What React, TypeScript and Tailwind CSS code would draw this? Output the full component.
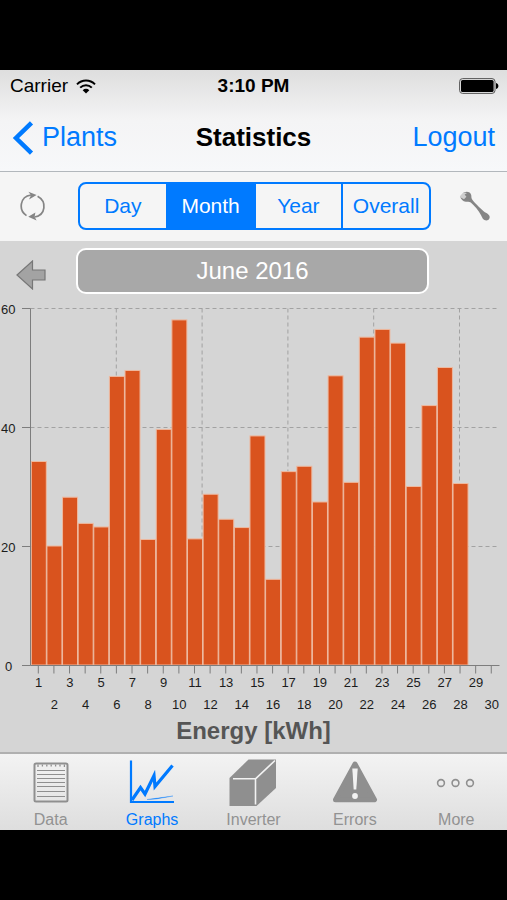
import React from 'react';

const energy = [
  34.2, 20.0, 28.2, 23.8, 23.2, 48.5, 49.5, 21.1, 39.6, 58.0,
  21.2, 28.7, 24.5, 23.1, 38.5, 14.4, 32.5, 33.4, 27.4, 48.6,
  30.7, 55.1, 56.4, 54.1, 30.0, 43.6, 50.0, 30.5,
];

const ranges = ['Day', 'Month', 'Year', 'Overall'];

// Plot area inside the chart's own coordinate system
const LEFT = 30.5;
const RIGHT = 499.5;
const TOP = 8.5;
const BOTTOM = 365.5;
const STEP = 15.62;
const DAYS = 30;

const toY = (value: number) => BOTTOM - (value / 60) * (BOTTOM - TOP);

const EnergyChart: React.FC = () => (
  <svg
    viewBox="0 0 507 417"
    className="block w-full"
    role="img"
    aria-label="Energy per day"
    fontFamily="'Liberation Sans', Arial, sans-serif"
    fontSize="13"
  >
    {/* Grid */}
    <g stroke="#a2a2a2" strokeWidth="1" strokeDasharray="4 3" fill="none">
      {[60, 40, 20].map((v) => (
        <path key={v} d={`M${LEFT} ${toY(v)}H${RIGHT}`} />
      ))}
      {[1, 2, 3, 4, 5].map((n) => (
        <path key={n} d={`M${LEFT + n * 85.8} ${TOP}V${BOTTOM}`} />
      ))}
    </g>

    {/* Bars */}
    <g fill="#d9531e" stroke="#eeb99f" strokeWidth="1">
      {energy.map((v, i) => (
        <rect key={i} x={LEFT + 0.8 + i * STEP} y={toY(v) - 0.5} width="15" height={BOTTOM - toY(v)} />
      ))}
    </g>

    {/* Axes */}
    <g stroke="#7d7d7d" strokeWidth="1" fill="none">
      <path d={`M${LEFT} ${TOP}V${BOTTOM}`} />
      <path d={`M${LEFT} ${BOTTOM}H${RIGHT}`} />
      {[60, 40, 20, 0].map((v) => (
        <path key={v} d={`M22 ${toY(v)}H${LEFT}`} />
      ))}
      {Array.from({ length: DAYS }, (_, i) => (
        <path key={i} d={`M${LEFT + 7.8 + i * STEP} ${BOTTOM}v8`} />
      ))}
    </g>

    <g fill="#1c1c1c">
      {[60, 40, 20, 0].map((v) => (
        <text key={v} x={v === 0 ? 5 : 1} y={toY(v) + 5}>
          {v}
        </text>
      ))}
      {Array.from({ length: DAYS }, (_, i) => (
        <text key={i} x={LEFT + 8.2 + i * STEP} y={i % 2 === 0 ? 387 : 409} textAnchor="middle">
          {i + 1}
        </text>
      ))}
    </g>
  </svg>
);

const WifiIcon = () => (
  <svg width="20" height="15" viewBox="0 0 20 15" fill="none" stroke="#000" strokeWidth="2">
    <path d="M1 5.4C6 .2 14 .2 19 5.4" />
    <path d="M4.2 8.6c3.3-3.3 8.3-3.3 11.6 0" />
    <path d="M6.7 11.2c1.9-1.8 4.7-1.8 6.6 0L10 14.5z" fill="#000" stroke="none" />
  </svg>
);

const BatteryIcon = () => (
  <svg width="40" height="16" viewBox="0 0 40 16">
    <rect x=".6" y=".6" width="35.4" height="14.8" rx="3" fill="none" stroke="#555" />
    <rect x="2" y="2" width="32.6" height="12" rx="1.6" />
    <path d="M37 5c1.8.5 2.4 1.6 2.4 3s-.6 2.5-2.4 3z" />
  </svg>
);

const RefreshIcon = () => (
  <svg width="26" height="30" viewBox="0 0 26 30" fill="none" stroke="#858585" strokeWidth="1.7">
    <path d="M6.5 24.6C-1.6 19.5-.5 5.6 11 4" />
    <path d="M17.6 5.2C27 10.4 26 24 14.500 26" />
    <path d="M8.4 .8l8.2 3.2-7.6 4.6 2-4.4z" fill="#858585" stroke="none" />
    <path d="M8.2 25.800l7.2-4.300-.8 4.300 2 3.800z" fill="#858585" stroke="none" />
  </svg>
);

const WrenchIcon = () => (
  <svg width="32" height="30" viewBox="0 0 32 30">
    <path
      d="M5 1.300C8 .2 11.400.8 12.200 4c.3 1.400 0 2.800.7 4 2.300 3.600 7.700 8.600 11.700 12.300 1.500 1.300 4.200 2 5.600 4.300 1.300 2.300-.2 4.900-2.800 4.900-3.100 0-4-2.400-5.200-4.900C19.600 19.500 15.500 15 11.800 11.600 10.300 10.400 8.700 11 6.800 10.800 3.900 10.500 1.800 8.400 1.300 5.600z"
      fill="#858585"
    />
    <path d="M.8 5.200L4.600 1.600c1.400-.2 2.400 0 3.300.7L5.600 3.600l1.800 2.200L5 8.300 2.200 6.800z" fill="#cfcfcf" />
  </svg>
);

const DataIcon = () => (
  <svg width="48" height="48" viewBox="0 0 48 48" fill="none" stroke="#8f8f8f">
    <rect x="7.5" y="5.5" width="33" height="38" rx="1.5" strokeWidth="2" />
    <path d="M11 6.5v2.5m4.400-2.500v2m4.400-2v2m4.400-2v2m4.400-2v2m4.400-2v2m4.400-2v2.500" strokeWidth="1.3" />
    <path d="M10 12.500h28M10 16.500h28M10 20.500h28M10 24.500h28M10 28.500h28M10 33.500h28M10 38.500h28" strokeWidth="1" />
  </svg>
);

const GraphsIcon = () => (
  <svg width="48" height="48" viewBox="0 0 48 48" fill="none" stroke="#007aff">
    <path d="M3 2.500V44h43" strokeWidth="2.200" />
    <path d="M4 42l8.500-12.500 4.500 6.500 9-18.500 1 11L44.500 7.500" strokeWidth="3.200" />
    <path d="M19 41.500l26-3.500-17 3z" fill="#007aff" strokeWidth=".3" />
  </svg>
);

const InverterIcon = () => (
  <svg width="48" height="48" viewBox="0 0 48 48" fill="#8f8f8f">
    <path d="M.5 20L19.500 1.500h27.500V30L27.500 48H.5z" />
    <path d="M4 20.800h22.500M26.500 20.800L46 2.500M26.500 20v26.500" fill="none" stroke="#f2f2f2" strokeWidth="1.600" />
  </svg>
);

const ErrorsIcon = () => (
  <svg width="48" height="48" viewBox="0 0 48 48">
    <path d="M24 6L43.500 41.800h-39z" fill="#8f8f8f" stroke="#8f8f8f" strokeWidth="5" strokeLinejoin="round" />
    <path d="M21.300 10.500h5.400l-1.400 21h-2.600z" fill="#f2f2f2" />
    <circle cx="24" cy="38" r="2.900" fill="#f2f2f2" />
  </svg>
);

const MoreIcon = () => (
  <svg width="48" height="48" viewBox="0 0 48 48" fill="none" stroke="#8f8f8f" strokeWidth="1.600">
    <circle cx="9" cy="25" r="3.400" />
    <circle cx="23.500" cy="25" r="3.400" />
    <circle cx="38" cy="25" r="3.400" />
  </svg>
);

const tabs = [
  { name: 'Data', icon: <DataIcon /> },
  { name: 'Graphs', icon: <GraphsIcon /> },
  { name: 'Inverter', icon: <InverterIcon /> },
  { name: 'Errors', icon: <ErrorsIcon /> },
  { name: 'More', icon: <MoreIcon /> },
];

const App: React.FC = () => {
  const [range, setRange] = React.useState('Month');
  const [tab, setTab] = React.useState('Graphs');

  return (
    <div className="min-h-screen flex flex-col justify-center bg-black font-['Liberation_Sans',Arial,sans-serif]">
      <header className="bg-linear-to-b from-[#dedede] via-[#f4f4f5] to-[#f7f8fa] border-b border-[#b2b7bc]">
        {/* Status bar */}
        <div className="grid grid-cols-3 items-center h-8 px-2 text-[19px] text-black">
          <div className="flex items-center gap-2 pl-0.5">
            <span>Carrier</span>
            <WifiIcon />
          </div>
          <span className="text-center font-bold">3:10 PM</span>
          <div className="flex justify-end">
            <BatteryIcon />
          </div>
        </div>

        {/* Navigation */}
        <div className="grid grid-cols-3 items-center h-[69px] px-3 pt-0.5 text-[27px] text-[#007aff]">
          <button className="flex items-center gap-2">
            <svg width="22" height="34" viewBox="0 0 22 34" fill="none" stroke="#007aff" strokeWidth="4.500">
              <path d="M19.500 1.800L4 17l15.500 15.200" />
            </svg>
            Plants
          </button>
          <h1 className="text-center text-[26px] font-bold text-black">Statistics</h1>
          <button className="text-right">Logout</button>
        </div>
      </header>

      {/* Toolbar */}
      <div className="flex items-center h-[69px] pb-0.5 pl-5 pr-4 bg-[#f5f5f5]">
        <button aria-label="Refresh">
          <RefreshIcon />
        </button>
        <div className="flex flex-1 h-12 ml-8 mr-7 rounded-lg border-2 border-[#007aff] overflow-hidden divide-x-2 divide-[#007aff]">
          {ranges.map((r) => (
            <button
              key={r}
              onClick={() => setRange(r)}
              className={`flex-1 basis-0 text-[21px] ${
                range === r ? 'bg-[#007aff] text-white' : 'text-[#007aff]'
              }`}
            >
              {r}
            </button>
          ))}
        </div>
        <button aria-label="Settings">
          <WrenchIcon />
        </button>
      </div>

      <main className="bg-[#d5d5d5]">
        <div className="flex items-center h-[59px] pl-4 pr-[78px]">
          <button aria-label="Previous month" className="pt-2">
            <svg width="30" height="30" viewBox="0 0 30 30">
              <path d="M1 15L16.500 1v9H29v10H16.500v9z" fill="#a3a3a3" stroke="#777" strokeWidth="1.200" />
            </svg>
          </button>
          <button className="flex-1 h-[46px] ml-[30px] rounded-[10px] border-2 border-white bg-[#a8a8a8] text-2xl text-white">
            June 2016
          </button>
        </div>
        <EnergyChart />
        <h2 className="h-[35px] text-center text-2xl leading-7 font-bold text-[#555]">Energy [kWh]</h2>
      </main>

      {/* Tab bar */}
      <nav className="grid grid-cols-5 h-[78px] pt-1 border-t-2 border-[#b0b0b0] bg-linear-to-b from-[#f3f3f3] to-[#dedede]">
        {tabs.map(({ name, icon }) => (
          <button
            key={name}
            onClick={() => setTab(name)}
            className={`flex flex-col items-center gap-1 text-base leading-5 ${
              tab === name ? 'text-[#007aff]' : 'text-[#929292]'
            }`}
          >
            {icon}
            {name}
          </button>
        ))}
      </nav>
    </div>
  );
};

export default App;
